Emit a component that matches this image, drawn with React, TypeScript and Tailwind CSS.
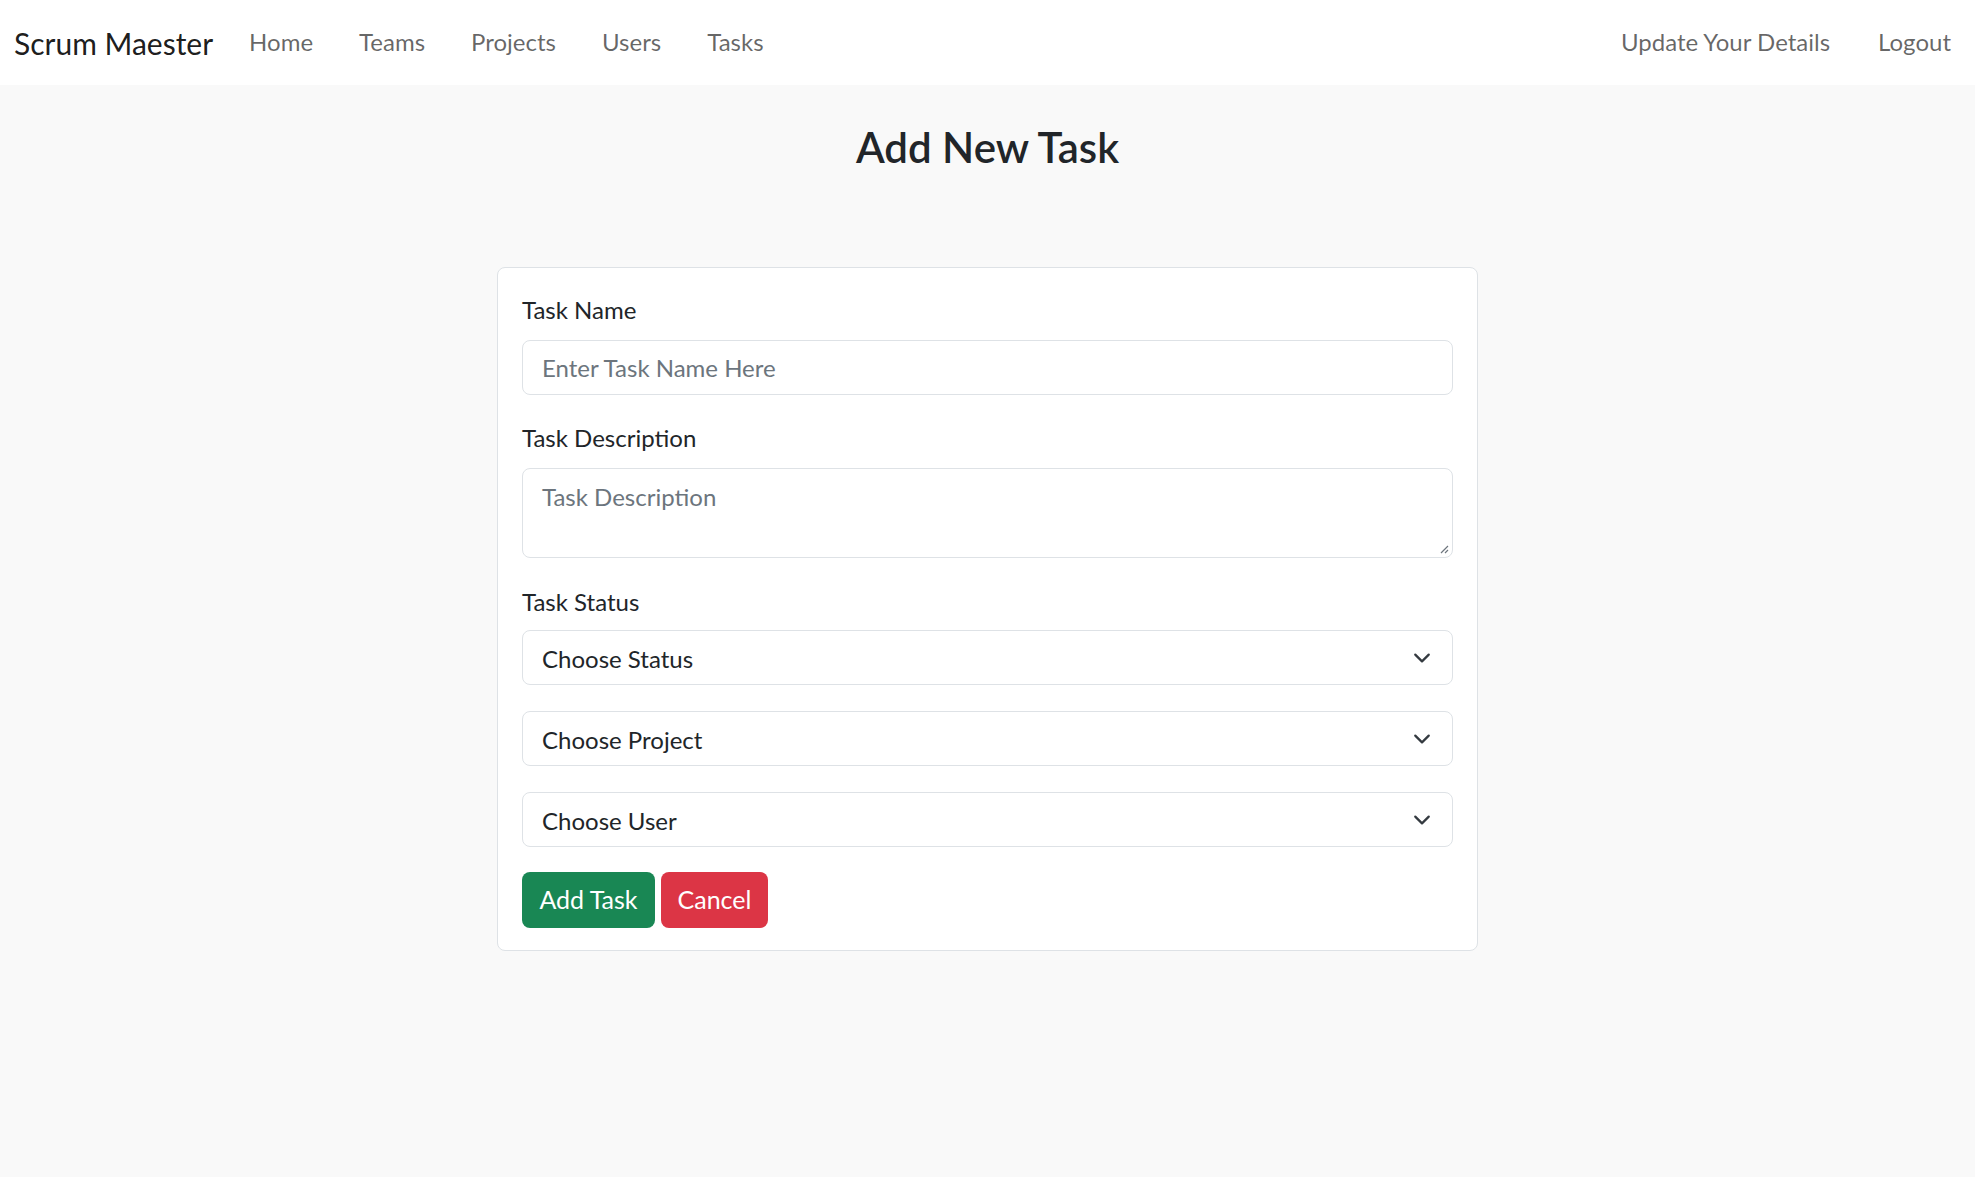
import React from "react";

const NAV_LINKS = ["Home", "Teams", "Projects", "Users", "Tasks"];
const SELECTS = ["Choose Status", "Choose Project", "Choose User"];

function Chevron() {
  return (
    <svg width="18" height="12" viewBox="0 0 16 10" fill="none" className="shrink-0">
      <path d="M2 2l6 6 6-6" stroke="#343a40" strokeWidth="2" strokeLinecap="round" strokeLinejoin="round" />
    </svg>
  );
}

function SelectBox({ label }: { label: string }) {
  return (
    <div className="flex h-[55px] items-center justify-between rounded-[8px] border border-[#dee2e6] bg-white pl-[19px] pr-[21px] text-[24px] text-[#212529]">
      <span className="pt-[2px]">{label}</span>
      <Chevron />
    </div>
  );
}

export default function App() {
  return (
    <div className="min-h-[1177px] bg-[#f9f9f9] text-[#212529]" style={{ fontFamily: "Lato, 'Liberation Sans', sans-serif" }}>
      {/* navbar */}
      <nav className="flex h-[85px] items-center justify-between bg-white pl-[14px]">
        <div className="flex items-center">
          <span className="mr-[13px] text-[30px] leading-none text-black/90">Scrum Maester</span>
          {NAV_LINKS.map((l) => (
            <span key={l} className="px-[23px] pb-[2px] text-[24px] text-black/60">
              {l}
            </span>
          ))}
        </div>
        <div className="flex items-center">
          <span className="px-[24px] pb-[2px] text-[24px] text-black/60">Update Your Details</span>
          <span className="px-[24px] pb-[2px] text-[24px] text-black/60">Logout</span>
        </div>
      </nav>

      {/* page */}
      <h1 className="mt-[32px] text-center text-[42px] font-semibold leading-[60px] text-[#212529]">Add New Task</h1>

      <div className="mx-auto mt-[90px] w-[981px] rounded-[8px] border border-[#dee2e6] bg-white px-[24px] pt-[23px] pb-[22px]">
        <label className="block text-[24px] leading-[37px]">Task Name</label>
        <div className="mt-[12px] flex h-[55px] items-center rounded-[8px] border border-[#dee2e6] pl-[19px] pt-[1px] text-[24px] text-[#6c757d]">
          Enter Task Name Here
        </div>

        <label className="mt-[24px] block text-[24px] leading-[37px]">Task Description</label>
        <div className="relative mt-[12px] h-[90px] rounded-[8px] border border-[#dee2e6] pl-[19px] pt-[9px] text-[24px] leading-[37px] text-[#6c757d]">
          Task Description
          <svg width="10" height="10" viewBox="0 0 10 10" className="absolute bottom-[3px] right-[3px]">
            <path d="M9 2L2 9M9 6L6 9" stroke="#6c757d" strokeWidth="1.2" />
          </svg>
        </div>

        <label className="mt-[25px] block text-[24px] leading-[37px]">Task Status</label>
        <div className="mt-[10px] flex flex-col gap-[26px]">
          {SELECTS.map((s) => (
            <SelectBox key={s} label={s} />
          ))}
        </div>

        <div className="mt-[25px] flex gap-[6px]">
          <button className="h-[56px] w-[133px] rounded-[8px] bg-[#198754] text-[25px] text-white">Add Task</button>
          <button className="h-[56px] w-[107px] rounded-[8px] bg-[#dc3545] text-[25px] text-white">Cancel</button>
        </div>
      </div>
    </div>
  );
}
